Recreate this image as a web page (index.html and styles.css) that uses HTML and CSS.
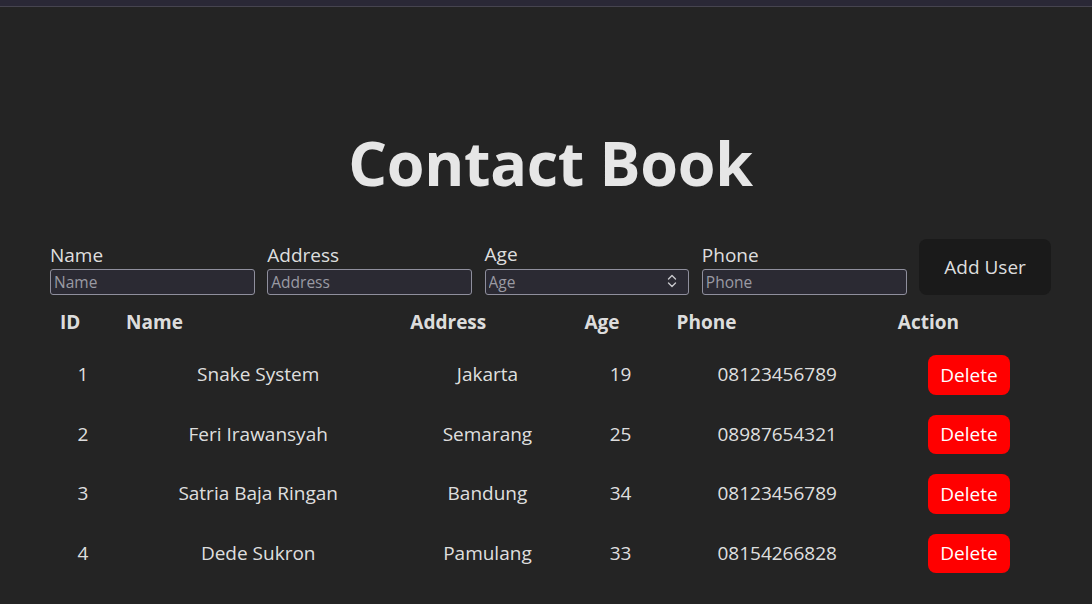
FILE: index.html
```html
<!DOCTYPE html>
<html lang="en">
<head>
  <meta charset="UTF-8">
  <meta name="viewport" content="width=device-width, initial-scale=1.0">
  <title>Contact Book</title>
  <link rel="stylesheet" href="styles.css">
</head>
<body>
  <div class="top-strip"></div>
  <div class="app">
    <h1>Contact Book</h1>

    <form class="user-form" onsubmit="return false">
      <div class="field">
        <label for="name">Name</label>
        <input id="name" type="text" placeholder="Name">
      </div>
      <div class="field">
        <label for="address">Address</label>
        <input id="address" type="text" placeholder="Address">
      </div>
      <div class="field">
        <label for="age">Age</label>
        <div class="number-wrap">
          <input id="age" type="text" placeholder="Age">
          <svg class="spinner" width="10" height="14" viewBox="0 0 10 14" fill="none" stroke="#c8c8cc" stroke-width="1.4" stroke-linecap="round" stroke-linejoin="round">
            <path d="M1.5 5 L5 1.5 L8.5 5"/>
            <path d="M1.5 9 L5 12.5 L8.5 9"/>
          </svg>
        </div>
      </div>
      <div class="field">
        <label for="phone">Phone</label>
        <input id="phone" type="text" placeholder="Phone">
      </div>
      <button class="add-button" type="submit">Add User</button>
    </form>

    <table class="users">
      <thead>
        <tr>
          <th class="col-id">ID</th>
          <th class="col-name">Name</th>
          <th class="col-address">Address</th>
          <th class="col-age">Age</th>
          <th class="col-phone">Phone</th>
          <th class="col-action">Action</th>
        </tr>
      </thead>
      <tbody>
        <tr>
          <td>1</td>
          <td>Snake System</td>
          <td>Jakarta</td>
          <td>19</td>
          <td>08123456789</td>
          <td><button class="delete-button">Delete</button></td>
        </tr>
        <tr>
          <td>2</td>
          <td>Feri Irawansyah</td>
          <td>Semarang</td>
          <td>25</td>
          <td>08987654321</td>
          <td><button class="delete-button">Delete</button></td>
        </tr>
        <tr>
          <td>3</td>
          <td>Satria Baja Ringan</td>
          <td>Bandung</td>
          <td>34</td>
          <td>08123456789</td>
          <td><button class="delete-button">Delete</button></td>
        </tr>
        <tr>
          <td>4</td>
          <td>Dede Sukron</td>
          <td>Pamulang</td>
          <td>33</td>
          <td>08154266828</td>
          <td><button class="delete-button">Delete</button></td>
        </tr>
      </tbody>
    </table>
  </div>
</body>
</html>
```

FILE: styles.css
```css
body {
  margin: 0;
  background-color: #242424;
  color: rgba(255, 255, 255, 0.87);
  font-family: "Open Sans", "Noto Sans", sans-serif;
  font-size: 19px;
}
.top-strip {
  height: 6px;
  background-color: #2a2836;
  border-bottom: 1px solid #46444f;
}
.app {
  width: 1001px;
  padding-left: 50px;
}
h1 {
  margin: 122px 0 0;
  font-size: 61px;
  line-height: 1.1;
  text-align: center;
  color: #e6e6e6;
  letter-spacing: -0.3px;
}
.user-form {
  display: flex;
  align-items: flex-end;
  gap: 12.5px;
  margin-top: 43px;
}
.field {
  display: flex;
  flex-direction: column;
  width: 205px;
}
.field label {
  font-size: 19px;
  line-height: 24px;
  margin-bottom: 2px;
}
.field input {
  box-sizing: border-box;
  width: 100%;
  height: 26px;
  margin: 0;
  padding: 0 3px;
  background-color: #2b2a33;
  border: 1px solid #8f8f9d;
  border-radius: 3px;
  color: #fbfbfe;
  font-family: "Open Sans", sans-serif;
  font-size: 15.5px;
}
.field input::placeholder {
  color: #9a9aa3;
}
.number-wrap {
  position: relative;
}
.spinner {
  position: absolute;
  right: 12px;
  top: 6px;
}
.add-button {
  width: 132px;
  height: 56px;
  background-color: #1a1a1a;
  color: rgba(255, 255, 255, 0.87);
  border: none;
  border-radius: 8px;
  font-family: "Open Sans", sans-serif;
  font-size: 19px;
  font-weight: 500;
}
.users {
  width: 1000px;
  margin-top: 1px;
  border-collapse: collapse;
}
.users th {
  padding: 14px 10px 10px;
  line-height: 25px;
  text-align: left;
  font-weight: bold;
}
.users td {
  padding: 10px 10px;
  text-align: center;
  line-height: 25px;
}
.col-id { width: 46px; }
.col-name { width: 264px; }
.col-address { width: 154px; }
.col-age { width: 72px; }
.col-phone { width: 201px; }
.col-action { width: 142px; }
.delete-button {
  height: 39.5px;
  width: 82px;
  padding: 0;
  background-color: #ff0000;
  color: #ffffff;
  border: none;
  border-radius: 8px;
  font-family: "Open Sans", sans-serif;
  font-size: 19px;
  vertical-align: middle;
}
```
